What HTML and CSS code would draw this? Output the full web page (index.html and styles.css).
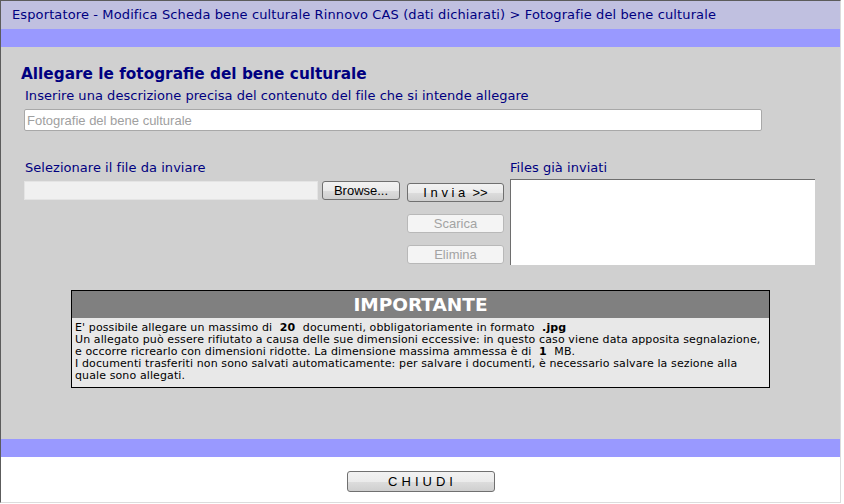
FILE: index.html
```html
<!DOCTYPE html>
<html lang="it">
<head>
<meta charset="utf-8">
<title>Fotografie del bene culturale</title>
<link rel="stylesheet" href="styles.css">
</head>
<body>
<div class="frame">
  <div class="topbar">Esportatore - Modifica Scheda bene culturale Rinnovo CAS (dati dichiarati) &gt; Fotografie del bene culturale</div>
  <div class="stripe"></div>
  <div class="main">
    <h1 class="title">Allegare le fotografie del bene culturale</h1>
    <div class="label desc-label">Inserire una descrizione precisa del contenuto del file che si intende allegare</div>
    <input class="desc-input" type="text" value="" placeholder="Fotografie del bene culturale">
    <div class="files">
      <div class="label sel-label">Selezionare il file da inviare</div>
      <div class="label sent-label">Files già inviati</div>
      <div class="picker">
        <div class="file-field"></div>
        <button class="btn browse" type="button">Browse...</button>
      </div>
      <div class="actions">
        <button class="btn invia" type="button">I n v i a  &gt;&gt;</button>
        <button class="btn disabled" type="button" disabled>Scarica</button>
        <button class="btn disabled" type="button" disabled>Elimina</button>
      </div>
      <div class="sent-list"></div>
    </div>
    <div class="notice">
      <div class="notice-head">IMPORTANTE</div>
      <div class="notice-body">
        E' possibile allegare un massimo di <b>&nbsp;20&nbsp;</b> documenti, obbligatoriamente in formato <b>&nbsp;.jpg</b><br>
        Un allegato può essere rifiutato a causa delle sue dimensioni eccessive: in questo caso viene data apposita segnalazione,<br>
        e occorre ricrearlo con dimensioni ridotte. La dimensione massima ammessa è di <b>&nbsp;1&nbsp;</b> MB.<br>
        I documenti trasferiti non sono salvati automaticamente: per salvare i documenti, è necessario salvare la sezione alla<br>
        quale sono allegati.
      </div>
    </div>
  </div>
  <div class="stripe"></div>
  <div class="footer">
    <button class="btn chiudi" type="button">CHIUDI</button>
  </div>
</div>
</body>
</html>
```

FILE: styles.css
```css
html, body {
  margin: 0;
  padding: 0;
  background: #ffffff;
}

.frame {
  width: 839px;
  height: 501px;
  border-top: 1px solid #5c5c5c;
  border-left: 1px solid #5c5c5c;
  border-right: 1px solid #dcdcdc;
  border-bottom: 1px solid #dcdcdc;
  display: flex;
  flex-direction: column;
  font-family: "DejaVu Sans", Verdana, sans-serif;
}

.topbar {
  height: 28px;
  line-height: 28px;
  background: #c0c0e0;
  color: #000080;
  font-size: 13px;
  letter-spacing: 0.12px;
  padding-left: 11px;
  white-space: nowrap;
}

.stripe {
  height: 18px;
  background: #9999ff;
}

.main {
  height: 392px;
  background: #d0d0d0;
  padding: 16px 0 0 0;
  box-sizing: border-box;
}

.title {
  margin: 0 0 0 20px;
  font-size: 15.3px;
  line-height: 22px;
  font-weight: bold;
  color: #000080;
}

.label {
  color: #000080;
  font-size: 13px;
  letter-spacing: 0.04px;
  line-height: 16px;
  white-space: nowrap;
}

.desc-label {
  margin: 3px 0 0 24px;
}

.desc-input {
  display: block;
  margin: 5px 0 0 23px;
  width: 738px;
  height: 22px;
  box-sizing: border-box;
  border: 1px solid #a8a8a8;
  border-radius: 2px;
  background: #ffffff;
  padding: 0 2px;
  font-family: "Liberation Sans", Arial, sans-serif;
  font-size: 13px;
  color: #333;
  outline: none;
}

.desc-input::placeholder {
  color: #a0a0a0;
}

.files {
  display: grid;
  grid-template-columns: 377px 97px 305px;
  column-gap: 6px;
  margin: 29px 0 0 23px;
}

.sel-label {
  grid-column: 1;
  margin-left: 1px;
}

.sent-label {
  grid-column: 3;
}

.picker {
  grid-column: 1;
  display: flex;
  align-items: flex-start;
  gap: 4px;
  margin-top: 5px;
}

.file-field {
  width: 294px;
  height: 19px;
  background: #f0f0f0;
  border: 1px solid #e4e4e4;
  box-sizing: border-box;
}

.btn {
  font-family: "Liberation Sans", Arial, sans-serif;
  font-size: 13px;
  color: #000;
  border: 1px solid #707070;
  border-radius: 3px;
  background: linear-gradient(#f2f2f2 0%, #ebebeb 50%, #dddddd 51%, #cfcfcf 100%);
  padding: 0;
  margin: 0;
  box-sizing: border-box;
}

.browse {
  width: 78px;
  height: 19px;
}

.actions {
  grid-column: 2;
  display: flex;
  flex-direction: column;
  gap: 12px;
  margin-top: 7px;
}

.actions .btn {
  width: 97px;
  height: 19px;
}

.invia {
  white-space: pre;
}

.btn.disabled {
  color: #a3a3a3;
  border-color: #b8b8b8;
  background: #f4f4f4;
}

.sent-list {
  grid-column: 3;
  margin-top: 3px;
  height: 86px;
  background: #ffffff;
  border-top: 1px solid #6e6e6e;
  border-left: 1px solid #6e6e6e;
  box-sizing: border-box;
}

.notice {
  margin: 25px 0 0 70px;
  width: 699px;
  border: 1px solid #000;
  box-sizing: border-box;
}

.notice-head {
  height: 27px;
  line-height: 27px;
  background: #808080;
  color: #ffffff;
  text-align: center;
  font-size: 18.5px;
  font-weight: bold;
}

.notice-body {
  background: #e8e8e8;
  color: #000;
  font-size: 11px;
  letter-spacing: 0.11px;
  line-height: 12px;
  padding: 4px 3px 5px 3px;
  white-space: nowrap;
}

.footer {
  flex: 1;
  display: flex;
  justify-content: center;
  align-items: flex-start;
  padding-top: 14px;
}

.chiudi {
  width: 148px;
  height: 21px;
  font-size: 13px;
  letter-spacing: 4px;
  padding-left: 4px;
}
```
